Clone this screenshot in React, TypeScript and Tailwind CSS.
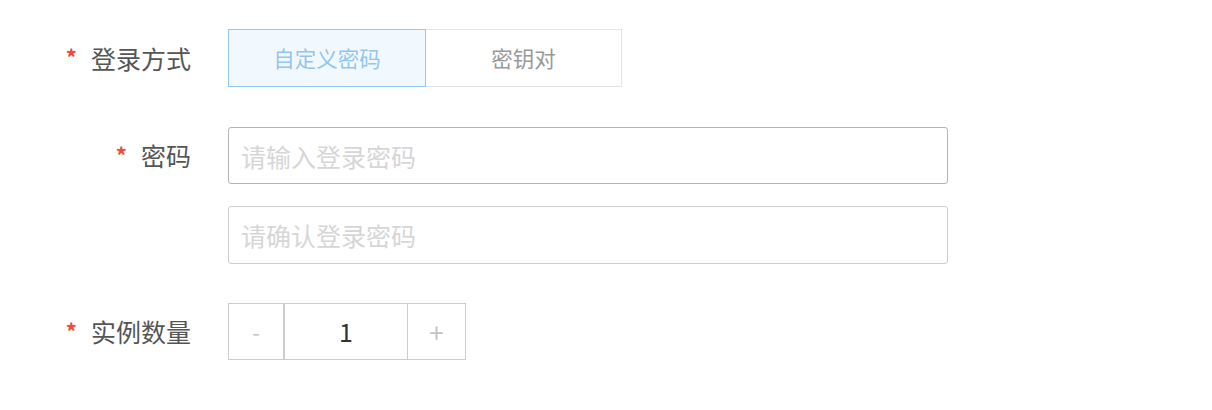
import React from "react";

const font = { fontFamily: '"Noto Sans CJK SC", "Noto Sans", sans-serif' };

function Label({ text }: { text: string }) {
  return (
    <div className="w-[191px] shrink-0 flex items-center justify-end text-[25px] leading-none text-[#555555]">
      <span className="text-[#f5463c] text-[22px] font-bold mr-[14px] relative top-[-2px]">*</span>
      <span>{text}</span>
    </div>
  );
}

export default function App() {
  return (
    <div className="w-[1212px] h-[410px] bg-white pt-[29px]" style={font}>
      <div className="flex items-center">
        <Label text="登录方式" />
        <div className="ml-[37px] flex h-[58px]">
          <div className="w-[198px] h-full flex items-center justify-center border border-[#92c9f5] bg-[#f2f9fe] text-[21.5px] text-[#92c6f2]">
            自定义密码
          </div>
          <div className="w-[196px] h-full flex items-center justify-center border border-l-0 border-[#e4e4e4] text-[21.5px] text-[#999999]">
            密钥对
          </div>
        </div>
      </div>

      <div className="flex items-center mt-[40px]">
        <Label text="密码" />
        <input
          className="ml-[37px] w-[720px] h-[57px] border border-[#b4b4b4] rounded-[3px] pl-[12px] text-[25px] text-[#333] placeholder:text-[#d6d6d6] outline-none"
          placeholder="请输入登录密码"
          style={font}
        />
      </div>

      <div className="flex items-center mt-[22px]">
        <div className="w-[191px] shrink-0" />
        <input
          className="ml-[37px] w-[720px] h-[58px] border border-[#cdcdcd] rounded-[3px] pl-[12px] text-[25px] text-[#333] placeholder:text-[#d6d6d6] outline-none"
          placeholder="请确认登录密码"
          style={font}
        />
      </div>

      <div className="flex items-center mt-[39px]">
        <Label text="实例数量" />
        <div className="ml-[37px] flex h-[57px]">
          <div className="w-[57px] h-full flex items-center justify-center border border-r-2 border-[#cccccc] text-[22px] text-[#c4c4c4]">
            -
          </div>
          <div className="w-[123px] h-full flex items-center justify-center border-y border-r border-[#cccccc] text-[25px] text-[#333333]">
            1
          </div>
          <div className="w-[58px] h-full flex items-center justify-center border-y border-r border-[#cccccc] text-[26px] text-[#c4c4c4]">
            +
          </div>
        </div>
      </div>
    </div>
  );
}
